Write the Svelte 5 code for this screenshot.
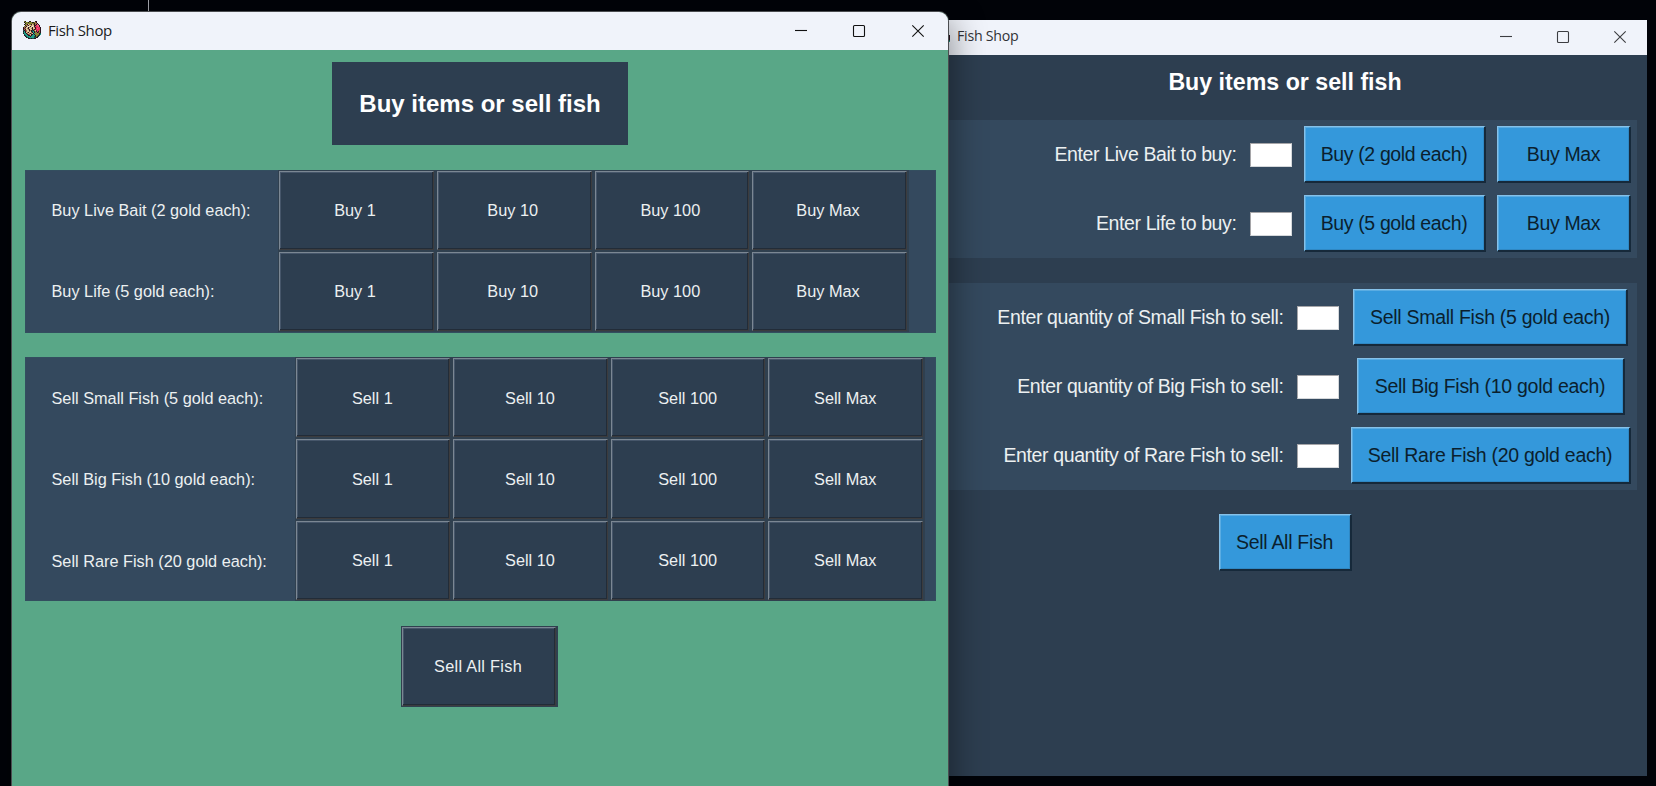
<script>
  const steps = ['1', '10', '100', 'Max'];
  const buyRows = ['Buy Live Bait (2 gold each):', 'Buy Life (5 gold each):'];
  const sellRows = [
    'Sell Small Fish (5 gold each):',
    'Sell Big Fish (10 gold each):',
    'Sell Rare Fish (20 gold each):'
  ];
  const buyForms = [
    { label: 'Enter Live Bait to buy:', action: 'Buy (2 gold each)' },
    { label: 'Enter Life to buy:', action: 'Buy (5 gold each)' }
  ];
  const sellForms = [
    { label: 'Enter quantity of Small Fish to sell:', action: 'Sell Small Fish (5 gold each)', width: 275 },
    { label: 'Enter quantity of Big Fish to sell:', action: 'Sell Big Fish (10 gold each)', width: 268 },
    { label: 'Enter quantity of Rare Fish to sell:', action: 'Sell Rare Fish (20 gold each)', width: 280 }
  ];

  // Pixel-art window icon, one character per pixel.
  const palette = {
    k: '#2b1420', o: '#7c8a2c', b: '#a6714c', c: '#e3c79c', r: '#e8345f',
    p: '#f0608a', t: '#1fa08a', d: '#14594f', m: '#7a2436', w: '#f6efe4'
  };
  const sprite = [
    '.ok...kk....kk....',
    '.koookoookkobk....',
    '..kobooobookbbk...',
    '.kookcbokcbkbkpk..',
    '..kbbkccbcckkrppk.',
    '.obkcwckcwckrrrpk.',
    'kbkcckbcckcbkrrrrk',
    'kmbcbkccbkcckrprrk',
    'kbkccbkcckbkmrrrrk',
    'dkmbcckbkdkbcmrrok',
    'ktkbccbckdtkbkrkok',
    'dtkcbkccbktkobkmok',
    'kttkbcbkbcktoobokd',
    '.dttkmbckktkobookt',
    '.kdttkkbktttkookd.',
    '..kdtttktttdkokd..',
    '...kddtttttddkk...',
    '.....kkdkddkk.....'
  ];
  const pixels = sprite.flatMap((row, y) =>
    [...row].map((c, x) => ({ x, y, fill: palette[c] })).filter((p) => p.fill)
  );
</script>

{#snippet titlebar()}
  <header class="titlebar">
    <svg class="icon" viewBox="0 0 18 18" shape-rendering="crispEdges">
      {#each pixels as p}
        <rect x={p.x} y={p.y} width="1" height="1" fill={p.fill} />
      {/each}
    </svg>
    <span class="title">Fish Shop</span>
    <svg class="ctl min" viewBox="0 0 12 12"><path d="M0 5.5H12" /></svg>
    <svg class="ctl max" viewBox="0 0 12 12"><rect x=".5" y=".5" width="11" height="11" rx="1" /></svg>
    <svg class="ctl close" viewBox="0 0 12 12"><path d="M.3 .3L11.7 11.7M11.7 .3L.3 11.7" /></svg>
  </header>
{/snippet}

{#snippet grid(rows, verb)}
  {#each rows as row}
    <div class="row">
      <span class="label">{row}</span>
      {#each steps as step}
        <button class="dark"><span>{verb} {step}</span></button>
      {/each}
    </div>
  {/each}
{/snippet}

<div class="desktop">
  <i class="hairline"></i>

  <section class="window back">
    {@render titlebar()}
    <main>
      <h1>Buy items or sell fish</h1>
      <div class="panel buy">
        {#each buyForms as f}
          <div class="form">
            <label>{f.label}</label>
            <i class="entry"></i>
            <button class="blue action">{f.action}</button>
            <button class="blue maxbtn">Buy Max</button>
          </div>
        {/each}
      </div>
      <div class="panel sell">
        {#each sellForms as f}
          <div class="form">
            <label>{f.label}</label>
            <i class="entry"></i>
            <div class="slot"><button class="blue" style="width: {f.width}px">{f.action}</button></div>
          </div>
        {/each}
      </div>
      <button class="blue all">Sell All Fish</button>
    </main>
  </section>

  <section class="window front">
    {@render titlebar()}
    <main>
      <h1>Buy items or sell fish</h1>
      <div class="panel buy">{@render grid(buyRows, 'Buy')}</div>
      <div class="panel sell">{@render grid(sellRows, 'Sell')}</div>
      <button class="dark all"><span>Sell All Fish</span></button>
    </main>
  </section>
</div>

<style>
  :global(body) { margin: 0; background: #010308; }
  * { box-sizing: border-box; }
  .desktop {
    position: relative;
    width: 1656px;
    height: 786px;
    overflow: hidden;
    background: #010308;
    font-family: "Liberation Sans", Arial, sans-serif;
  }
  .hairline { position: absolute; left: 148px; top: 0; width: 1px; height: 12px; background: #a9abb2; }
  .window { position: absolute; display: flex; flex-direction: column; }
  main { flex: 1; display: flex; flex-direction: column; align-items: center; }
  h1 { margin: 0; color: #fff; font-weight: 700; white-space: nowrap; }
  button { border: 0; margin: 0; padding: 0; font-family: inherit; white-space: nowrap; border-radius: 0; }

  .titlebar { display: flex; align-items: center; background: #f0f3fa; flex: none; }
  .title {
    flex: 1;
    font-family: "Open Sans", "Noto Sans", sans-serif;
    color: #1b1b1d;
    white-space: nowrap;
  }
  .icon { flex: none; }
  .ctl { width: 12px; height: 12px; flex: none; fill: none; stroke: #111; stroke-width: 1.1; overflow: visible; }

  /* Front window */
  .front {
    left: 12px; top: 12px; width: 936px; height: 800px;
    background: #59a787;
    border-radius: 9px 9px 0 0;
    box-shadow: 0 0 0 1px #4b4d50, 4px 8px 34px rgba(0, 0, 0, .42);
  }
  .front .titlebar { height: 38px; padding: 0 24px 0 11px; border-radius: 9px 9px 0 0; }
  .front .icon { width: 18px; height: 18px; margin: -2px 7px 0 0; }
  .front .title { font-size: 15px; letter-spacing: -.4px; padding-bottom: 2px; }
  .front .min { margin-right: 46px; }
  .front .max { margin-right: 47px; }
  .front h1 {
    margin-top: 12px; width: 296px; height: 83px; line-height: 84px;
    text-align: center; font-size: 24px; background: #2d3e50;
  }
  .front .panel { width: 911px; background: #34495e; box-shadow: inset 0 0 0 1px #334e5f; }
  .front .buy { margin-top: 25px; height: 163px; --label: 253.7px; }
  .front .sell { margin-top: 24px; height: 244px; --label: 270px; }
  .row { display: flex; height: 81.2px; align-items: stretch; }
  .label {
    width: var(--label); flex: none; padding-left: 27px;
    line-height: 81px; font-size: 16.3px; color: #ecf0f1; white-space: nowrap;
  }
  .front .sell .row { height: 81.4px; }
  .front .sell .label { line-height: 82px; }
  .dark {
    width: 157.67px; height: 81.2px; flex: none; display: flex; padding: 1px 2px 1px 1px;
    background: #30404f; font-size: 16.3px; color: #ecf0f1;
  }
  .dark span {
    flex: 1; align-self: stretch; display: flex; align-items: center; justify-content: center;
    padding: 1px 2px 0 0;
    background: #2d3e50;
    border-style: solid; border-width: 1px;
    border-color: #7b8793 #3c3c3e #3c3c3e #7b8793;
    box-shadow: inset -1px -1px #222c38, inset 1px 1px #46566a;
  }
  .front .buy .dark span { padding: 0 3px 0 0; }
  .front .sell .dark span { padding: 1px 1px 0 0; }
  .front .all { margin-top: 25px; margin-right: 1px; }
  .front .all span { letter-spacing: .3px; padding-top: 0; }

  /* Back window */
  .back { left: 923px; top: 20px; width: 724px; height: 756px; background: #2d3e50; }
  .back .titlebar { height: 35px; padding: 0 21.5px 0 10px; }
  .back .icon { width: 17px; height: 17px; margin-right: 7px; }
  .back .title { font-size: 14.2px; letter-spacing: -.26px; color: #303236; padding-bottom: 4px; }
  .back .ctl { stroke: #3c3d41; margin-top: -2px; }
  .back .min, .back .max { margin-right: 45px; }
  .back h1 { margin-top: 11px; height: 32px; line-height: 32px; font-size: 23.2px; }
  .back .panel { width: 703px; background: #34495e; padding-top: 6px; }
  .back .buy { margin-top: 22px; height: 138px; }
  .back .sell { margin-top: 25px; height: 207px; }
  .form { display: flex; align-items: center; justify-content: flex-end; height: 57px; margin-bottom: 12px; }
  .form label { font-size: 19.5px; letter-spacing: -.38px; color: #ecf0f1; white-space: nowrap; margin-right: 13px; }
  .entry { width: 42px; height: 24px; background: #fff; border: 1px solid #a5a5a8; border-right-color: #d5d8db; border-bottom-color: #d5d8db; flex: none; }
  .blue {
    height: 57px; background: #3498db; color: #0b1f2e; font-size: 19.5px; letter-spacing: -.28px;
    border: solid; border-width: 1px 2px 2px 1px; border-color: #85c1e9 #16293a #16293a #85c1e9;
    box-shadow: inset 1px 1px #5aace2, inset -1px -1px #2f88c4;
  }
  .action { width: 182px; margin: 0 11px 0 12px; }
  .buy .blue { letter-spacing: -.36px; }
  .buy .maxbtn { width: 134px; margin-right: 6px; padding-left: 1px; }
  .slot { width: 280px; margin: 0 6px 0 12px; display: flex; justify-content: center; }
  .back .all { width: 133px; margin-top: 24px; }
</style>
